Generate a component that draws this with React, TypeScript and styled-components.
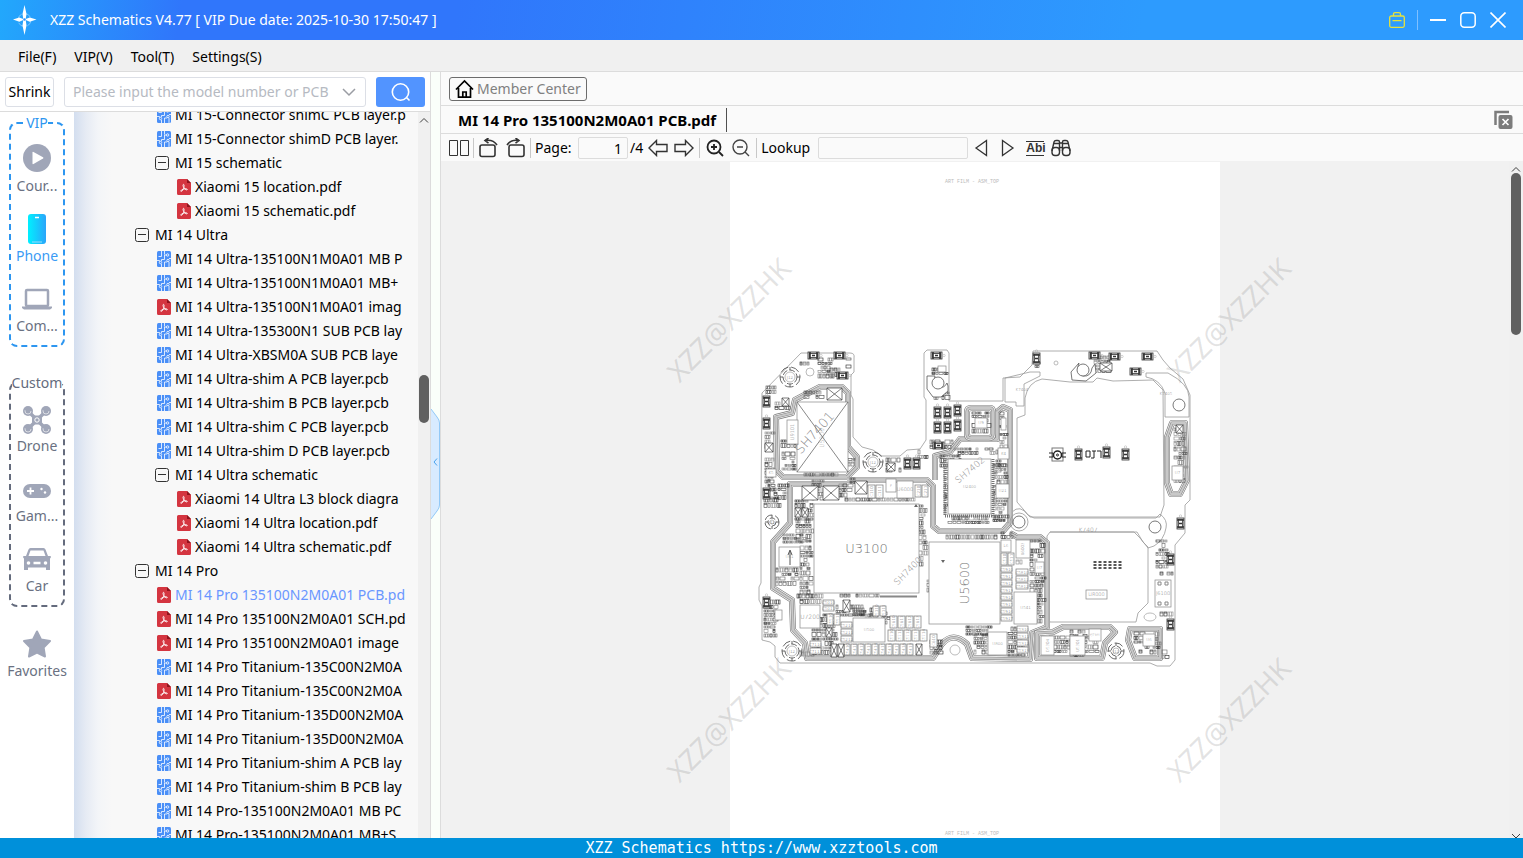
import React from "react";
import styled, { createGlobalStyle } from "styled-components";

const GlobalStyle = createGlobalStyle`
  *, *::before, *::after { box-sizing: border-box; }
  html, body, #root { height: 100%; margin: 0; }
  body { font-family: "Noto Sans", "Open Sans", sans-serif; font-size: 14px; line-height: 20px; color: #000; overflow: hidden; }
  button, input { font: inherit; color: inherit; margin: 0; }
  button { background: none; border: 0; padding: 0; cursor: pointer; }
`;

/* ---------- window frame ---------- */

const Window = styled.div`
  display: flex;
  flex-direction: column;
  height: 100vh;
  background: #fafafa;
`;

const TitleBar = styled.header`
  display: flex;
  align-items: center;
  flex: none;
  height: 40px;
  padding: 0 17px 0 12px;
  color: #fff;
  background: linear-gradient(100deg, #22a8fc 0, #3076fb 180px, #3076fb 30%, #2d9bfe 75%, #2d9bfe 100%);
`;

const AppTitle = styled.h1`
  flex: 1;
  margin: 0 0 0 12px;
  font-size: 14px;
  font-weight: 400;
  white-space: nowrap;
`;

const WindowButtons = styled.div`
  display: flex;
  align-items: center;
  gap: 14px;
`;

const WindowButton = styled.button`
  width: 16px;
  height: 16px;
  svg { display: block; }
`;

const TitleDivider = styled.span`
  width: 1px;
  height: 20px;
  margin: 0 -2px;
  background: #7fc0ff;
`;

const MenuBar = styled.nav`
  display: flex;
  flex: none;
  align-items: center;
  gap: 18px;
  height: 32px;
  padding: 2px 18px 0;
  background: #f0f0f0;
  border-bottom: 1px solid #dcdcdc;
`;

const Body = styled.main`
  display: flex;
  flex: 1;
  min-height: 0;
`;

const Footer = styled.footer`
  flex: none;
  height: 20px;
  background: #0090da;
  color: #fff;
  text-align: center;
  font: 400 15px/20px "DejaVu Sans Mono", monospace;
`;

/* ---------- left panel ---------- */

const LeftPanel = styled.section`
  display: flex;
  flex-direction: column;
  flex: none;
  width: 431px;
  border-right: 1px solid #dcdcdc;
`;

const SearchRow = styled.form`
  display: flex;
  flex: none;
  align-items: center;
  gap: 10px;
  height: 40px;
  padding: 0 5px;
  background: #fff;
  border-bottom: 1px solid #dcdcdc;
`;

const ShrinkButton = styled.button`
  width: 49px;
  height: 30px;
  border: 1px solid #dcdfe6;
  border-radius: 3px;
  background: #fff;
`;

const ModelBox = styled.label`
  display: flex;
  flex: 1;
  align-items: center;
  height: 30px;
  padding: 0 8px;
  border: 1px solid #dcdfe6;
  border-radius: 3px;
  background: #fff;
  svg { flex: none; }
`;

const ModelInput = styled.input`
  flex: 1;
  min-width: 0;
  border: 0;
  outline: 0;
  padding: 0;
  background: none;
  &::placeholder { color: #b6bac2; opacity: 1; }
`;

const SearchButton = styled.button`
  display: flex;
  align-items: center;
  justify-content: center;
  width: 49px;
  height: 30px;
  border-radius: 3px;
  background: #5294ff;
`;

const Browser = styled.div`
  display: flex;
  flex: 1;
  min-height: 0;
`;

const Sidebar = styled.aside`
  flex: none;
  width: 74px;
  padding: 1px 9px 0;
  background: #fff;
`;

const Group = styled.fieldset<{ $color: string }>`
  min-width: 0;
  margin: 0 0 26px;
  padding: 9px 0;
  border: 2px dashed ${(p) => p.$color};
  border-radius: 8px;
  display: flex;
  flex-direction: column;
  gap: 16px;
  &:last-of-type { margin-bottom: 20px; }
`;

const GroupLegend = styled.legend<{ $color: string }>`
  margin: 0 auto;
  padding: 0;
  color: ${(p) => p.$color};
`;

const CategoryButton = styled.button<{ $active?: boolean }>`
  display: flex;
  flex-direction: column;
  align-items: center;
  gap: 2px;
  width: 100%;
  color: ${(p) => (p.$active ? "#3a9bf5" : "#6a7182")};
  white-space: nowrap;
  svg { display: block; }
`;

const Tree = styled.div`
  flex: 1;
  min-width: 0;
  padding-right: 12px;
  overflow: hidden;
  background: linear-gradient(90deg, #d3deef 0, #e6ebf4 12px, #f3f5f8 24px, #f8f8f8 38px);
`;

const TreeList = styled.ul`
  list-style: none;
  margin: -9px 0 0;
  padding: 0;
`;

const TreeRow = styled.li<{ $level: number; $selected?: boolean }>`
  display: flex;
  align-items: center;
  height: 24px;
  padding-left: ${(p) => 41 + p.$level * 20}px;
  color: ${(p) => (p.$selected ? "#6a96ff" : "#000")};
  svg { display: block; }
`;

const RowIcon = styled.span<{ $file?: boolean }>`
  flex: none;
  width: 20px;
  padding-left: ${(p) => (p.$file ? 2 : 0)}px;
`;

const RowText = styled.span`
  flex: 1;
  min-width: 0;
  overflow: hidden;
  white-space: nowrap;
`;

const ScrollTrack = styled.div<{ $width: number }>`
  display: flex;
  flex: none;
  flex-direction: column;
  align-items: center;
  justify-content: space-between;
  width: ${(p) => p.$width}px;
  background: #f0f0f0;
  position: relative;
  svg { display: block; }
`;

const ScrollThumb = styled.div<{ $top: number; $height: number }>`
  position: absolute;
  top: ${(p) => p.$top}px;
  height: ${(p) => p.$height}px;
  width: 10px;
  border-radius: 5px;
  background: #606060;
`;

const Splitter = styled.div`
  position: relative;
  flex: none;
  display: flex;
  align-items: center;
  width: 10px;
  background: #fafffa;
  border-right: 1px solid #dcdcdc;
`;

const SplitHandle = styled.button`
  width: 9px;
  height: 110px;
  margin-top: 18px;
  svg { display: block; }
`;

/* ---------- document panel ---------- */

const DocPanel = styled.section`
  display: flex;
  flex: 1;
  flex-direction: column;
  min-width: 0;
`;

const MemberRow = styled.div`
  display: flex;
  align-items: center;
  flex: none;
  height: 34px;
  padding: 0 8px;
  border-bottom: 1px solid #dcdcdc;
`;

const MemberButton = styled.button`
  display: flex;
  align-items: center;
  gap: 3px;
  height: 24px;
  padding: 0 5px;
  border: 1px solid #6c6c6c;
  border-radius: 3px;
  color: #808080;
`;

const TabRow = styled.div`
  display: flex;
  align-items: center;
  justify-content: space-between;
  flex: none;
  height: 28px;
  padding: 0 9px 0 17px;
  border-bottom: 1px solid #dcdcdc;
`;

const DocTab = styled.button`
  height: 24px;
  padding-right: 10px;
  border-right: 1px solid #505050;
  font-size: 15px;
  font-weight: 700;
`;

const ToolBar = styled.div`
  display: flex;
  align-items: center;
  flex: none;
  gap: 4px;
  height: 26px;
  padding-left: 8px;
  margin-top: 1px;
`;

const Tool = styled.button<{ $width?: number }>`
  display: flex;
  align-items: center;
  justify-content: center;
  flex: none;
  width: ${(p) => p.$width ?? 22}px;
  height: 22px;
`;

const ToolSep = styled.span`
  flex: none;
  width: 1px;
  height: 20px;
  background: #c8c8c8;
`;

const ToolLabel = styled.label<{ $width: number }>`
  flex: none;
  width: ${(p) => p.$width}px;
  white-space: nowrap;
`;

const PageCount = styled.span`
  display: flex;
  align-items: center;
  gap: 2px;
`;

const ToolInput = styled.input<{ $width: number }>`
  flex: none;
  width: ${(p) => p.$width}px;
  height: 22px;
  padding: 0 5px;
  border: 1px solid #dcdcdc;
  border-radius: 2px;
  background: #fafafa;
  text-align: right;
  outline: 0;
`;

const AbiGlyph = styled.span`
  width: 18px;
  border: solid #333;
  border-width: 1px 0;
  color: #333;
  font: 700 12px/13px "Liberation Sans", sans-serif;
`;

const Viewer = styled.div`
  display: flex;
  flex: 1;
  min-height: 0;
`;

const Canvas = styled.div`
  display: flex;
  justify-content: center;
  flex: 1;
  min-width: 0;
  padding-top: 1px;
  overflow: hidden;
  background: #f1f1f1;
`;

const Page = styled.article`
  flex: none;
  width: 490px;
  background: #fff;
  svg { display: block; overflow: visible; }
`;

/* ---------- icons ---------- */

const PcbIcon = () => (
  <svg width="14" height="16" viewBox="0 0 14 16" fill="none">
    <rect width="14" height="16" rx="1.5" fill="#4a8ff7" />
    <path d="M4.500 0v5.500H1.500M7.500 0v3.500M0 9.500h2.500v1M9.500 4H7.500v4.500h-3V10M14 7.500h-2M4.500 16v-3M7.500 16v-5h2.500M12 11v5" stroke="#fff" strokeWidth=".8" />
    <circle cx="10.600" cy="4" r="1.200" stroke="#fff" strokeWidth=".8" />
    <circle cx="3.500" cy="11.500" r="1.200" stroke="#fff" strokeWidth=".8" />
    <circle cx="11" cy="9.500" r="1.200" stroke="#fff" strokeWidth=".8" />
  </svg>
);

const PdfIcon = () => (
  <svg width="14" height="16" viewBox="0 0 14 16" fill="none">
    <path d="M1.500 0H10l4 4v10.500a1.500 1.500 0 0 1-1.500 1.500h-11A1.500 1.500 0 0 1 0 14.500v-13A1.500 1.500 0 0 1 1.500 0Z" fill="#d43540" />
    <path d="M10 0l4 4h-4Z" fill="#8e141d" />
    <path d="M6.600 5.400c.8 0 .5 2 .2 3.100-.4 1.500-1.700 3.900-2.600 3.900-.8 0-.5-1 .9-1.700 1.300-.7 4.200-1.300 5-.6.700.6-.2 1.100-1.200.6C7.800 10 6 7.900 6 6.300c0-.5.200-.9.600-.9Z" stroke="#fff" strokeWidth=".9" />
  </svg>
);

const MinusIcon = () => (
  <svg width="14" height="14" viewBox="0 0 14 14" fill="none" stroke="#333">
    <rect x=".5" y=".5" width="13" height="13" rx="2" />
    <path d="M3 6.500h8" />
  </svg>
);

const Caret = ({ down }: { down?: boolean }) => (
  <svg width="12" height="12" viewBox="0 0 12 12" fill="none" stroke="#404040">
    <path d={down ? "M2 8l4 4 4-4" : "M2 10.500l4-4 4 4"} />
  </svg>
);

const gray = "#a0a6b8";
const categoryIcons: Record<string, React.ReactNode> = {
  play: (
    <>
      <circle cx="16" cy="16" r="14" fill={gray} />
      <path d="M11.500 10.500q0-1 1-.5l9.500 5.300q1 .7 0 1.300L12.500 22q-1 .5-1-.5Z" fill="#fff" />
    </>
  ),
  phone: (
    <>
      <defs>
        <linearGradient id="phoneFill" x1="0" x2="1" y1="0" y2="0">
          <stop offset="0" stopColor="#00f0ff" />
          <stop offset="1" stopColor="#2aa5fa" />
        </linearGradient>
      </defs>
      <rect x="7" y="2" width="18" height="30" rx="3" fill="url(#phoneFill)" />
      <path d="M14 5.500h4" stroke="#fff" strokeWidth="1.500" />
      <path d="M11 30h10" stroke="#9df" />
    </>
  ),
  laptop: (
    <>
      <rect x="5" y="8" width="22" height="16" rx="1" fill="none" stroke={gray} strokeWidth="2.500" />
      <path d="M1 24.500h30v1.500l-2 1.500H3L1 26Z" fill={gray} />
    </>
  ),
  drone: (
    <>
      <path d="M7 9l18 18M25 9L7 27" stroke={gray} strokeWidth="3.500" />
      <rect x="11" y="13.500" width="10" height="9" rx="3" fill={gray} />
      <circle cx="16" cy="18" r="2.200" fill={gray} stroke="#fff" />
      {[[7, 9], [25, 9], [7, 27], [25, 27]].map(([x, y]) => (
        <g key={`${x}-${y}`}>
          <circle cx={x} cy={y} r="5" fill={gray} />
          <circle cx={x} cy={y} r="3" fill="none" stroke="#fff" strokeWidth=".6" strokeDasharray="10 9" />
        </g>
      ))}
    </>
  ),
  gamepad: (
    <>
      <rect x="2" y="12" width="28" height="14" rx="7" fill={gray} />
      <path d="M9.500 15.500v7M6 19h7" stroke="#fff" strokeWidth="1.800" />
      <circle cx="20.500" cy="17" r="1.200" fill="#fff" />
      <circle cx="24" cy="20.500" r="1.200" fill="#fff" />
    </>
  ),
  car: (
    <>
      <path d="M7.500 7.500Q8 6 9.500 6h13q1.500 0 2 1.500L27 14h2.500q1 1 0 2L29 16.500V28h-4v-2.500H7V28H3V16.500L2.500 16q-1-1 0-2H5Z" fill={gray} />
      <path d="M9.500 8.500h13l2 5.500h-17Z" fill="#fff" />
      <circle cx="7.500" cy="21" r="1.800" fill="#fff" />
      <circle cx="24.500" cy="21" r="1.800" fill="#fff" />
      <path d="M12.500 21h7" stroke="#fff" strokeWidth="2.500" />
    </>
  ),
  star: <path d="M16 4.500l4 8 9 1.500-6.400 6.500 1.400 9L16 25.500 8 29.500l1.400-9L3 14l9-1.500Z" fill={gray} stroke={gray} strokeWidth="2" strokeLinejoin="round" />,
};

/* ---------- circuit board drawing ---------- */

type Box = [number, number, number, number];

const makeRandom = (seed: number) => () => {
  seed = (seed * 1103515245 + 12345) % 2147483648;
  return seed / 2147483648;
};

// Fills an area with rows of small passive parts.
const Parts = ({ area: [x, y, w, h], density = 0.88 }: { area: Box; density?: number }) => {
  const random = makeRandom(Math.round(x * 31 + y * 17 + w));
  const out: React.ReactNode[] = [];
  let cy = y;
  while (cy < y + h - 2) {
    const rowH = 3 + Math.floor(random() * 3);
    let cx = x;
    while (cx < x + w - 2) {
      const partW = 2 + Math.floor(random() * 4);
      if (random() < density) {
        const shade = ["#222", "#444", "#666", "#888"][Math.floor(random() * 4)];
        out.push(
          <g key={`${cx}-${cy}`} stroke={shade} strokeWidth=".6" fill="none">
            <rect x={cx} y={cy} width={partW} height={rowH - 1} />
            {random() > 0.25 && <path d={partW > 3 ? `M${cx + 1.5} ${cy}v${rowH - 1}M${cx + partW - 1.5} ${cy}v${rowH - 1}` : `M${cx} ${cy + 1}h${partW}`} />}
          </g>
        );
      }
      cx += partW + 1;
    }
    cy += rowH + 0.5;
  }
  return <>{out}</>;
};

// Rows of equal labelled capacitors.
const CapGrid = ({ x, y, cols, rows, w, h, label }: { x: number; y: number; cols: number; rows: number; w: number; h: number; label: string }) => (
  <g>
    {Array.from({ length: cols * rows }, (_, i) => {
      const cx = x + (i % cols) * (w + 1);
      const cy = y + Math.floor(i / cols) * (h + 1);
      const turn = h > w ? `rotate(-90 ${cx + w / 2} ${cy + h / 2})` : undefined;
      return (
        <g key={i}>
          <rect x={cx} y={cy} width={w} height={h} fill="#fff" stroke="#777" strokeWidth=".7" />
          <text x={cx + w / 2} y={cy + h / 2 + 1.5} fontSize="4" textAnchor="middle" fill="#666" transform={turn}>
            {label + (i + 10)}
          </text>
        </g>
      );
    })}
  </g>
);

const DarkPart = ({ x, y, wide }: { x: number; y: number; wide?: boolean }) => {
  const w = wide ? 11 : 7;
  const h = wide ? 7 : 11;
  return (
    <g fill="none" stroke="#333" strokeWidth=".8">
      <rect x={x} y={y} width={w} height={h} fill="#ddd" />
      <rect x={x + 1.5} y={y + 1.5} width={w - 3} height={h - 3} fill="#fff" />
      <path d={wide ? `M${x + 2} ${y}v7M${x + 9} ${y}v7M${x + 4} ${y + 3.5}h3` : `M${x} ${y + 2}h7M${x} ${y + 9}h7M${x + 2} ${y + 5.5}h3`} strokeWidth="1.6" />
      <circle cx={wide ? x + 13 : x + 3.5} cy={wide ? y + 3.5 : y - 2} r="1.2" stroke="#aaa" strokeWidth=".5" />
    </g>
  );
};

const Chip = ({ box: [x, y, w, h], label, size = 4, turn = 0 }: { box: Box; label?: string; size?: number; turn?: number }) => (
  <g>
    <rect x={x} y={y} width={w} height={h} fill="#fff" stroke="#888" strokeWidth=".7" />
    {label && (
      <text x={x + w / 2} y={y + h / 2 + size * 0.35} fontSize={size} textAnchor="middle" fill="#777" transform={turn ? `rotate(${turn} ${x + w / 2} ${y + h / 2})` : undefined}>
        {label}
      </text>
    )}
  </g>
);

const Crossed = ({ box: [x, y, w, h] }: { box: Box }) => (
  <path d={`M${x} ${y}h${w}v${h}h${-w}ZL${x + w} ${y + h}M${x + w} ${y}L${x} ${y + h}`} fill="#fff" stroke="#444" strokeWidth=".7" />
);

const Shield = ({ d }: { d: string }) => (
  <g fill="none" strokeLinejoin="round">
    <path d={d} stroke="#777" strokeWidth="6" />
    <path d={d} stroke="#f4f4f4" strokeWidth="4.8" />
    <path d={d} stroke="#888" strokeWidth="3.200" />
    <path d={d} stroke="#c8c8c8" strokeWidth="2" />
  </g>
);

const Screw = ({ x, y, r = 9 }: { x: number; y: number; r?: number }) => (
  <g fill="none" stroke="#444" strokeWidth=".8">
    <circle cx={x} cy={y} r={r} strokeDasharray="9 3" />
    <circle cx={x} cy={y} r={r - 3} strokeDasharray="6 2" />
    <circle cx={x} cy={y} r={r - 5} stroke="#aaa" />
    <path d={`M${x - r} ${y}h3M${x + r - 3} ${y}h3M${x} ${y - r}v3M${x} ${y + r - 3}v3`} />
    <text x={x} y={y + 1.5} fontSize="4" textAnchor="middle" fill="#666" stroke="none">J12</text>
  </g>
);

const clusters: Box[] = [
  [800, 362, 16, 6], [818, 358, 15, 22], [830, 368, 12, 10], [846, 358, 6, 12], [766, 386, 12, 8], [804, 391, 22, 9],
  [775, 402, 16, 10], [765, 432, 8, 20], [765, 458, 10, 26], [781, 440, 16, 8], [782, 452, 14, 20], [848, 454, 8, 14],
  [798, 473, 42, 4], [764, 498, 16, 12], [778, 484, 10, 18], [795, 500, 18, 22], [796, 520, 17, 24], [783, 534, 22, 12],
  [776, 568, 22, 20], [800, 546, 12, 50], [797, 594, 25, 10], [812, 480, 12, 22], [850, 478, 16, 10], [840, 498, 76, 5],
  [918, 505, 8, 60], [839, 484, 14, 12], [932, 368, 16, 8], [934, 392, 14, 10], [930, 440, 24, 8], [918, 450, 10, 10],
  [886, 458, 16, 16], [940, 455, 22, 12], [954, 448, 40, 10], [944, 466, 4, 56], [948, 516, 50, 8], [996, 450, 11, 22],
  [972, 412, 18, 22], [1000, 412, 7, 36], [993, 464, 15, 58], [1001, 532, 14, 8], [946, 535, 54, 6], [1030, 540, 14, 84],
  [1016, 560, 12, 6], [853, 608, 24, 8], [862, 614, 18, 5], [836, 605, 30, 12], [820, 614, 12, 8], [764, 600, 14, 40],
  [812, 618, 24, 38], [927, 580, 3, 14], [930, 640, 14, 14], [966, 626, 24, 12], [974, 634, 16, 22], [1008, 627, 16, 30],
  [1070, 630, 16, 26], [1044, 636, 56, 20], [1134, 632, 14, 22], [1150, 632, 9, 22], [1174, 428, 12, 58], [1156, 540, 12, 30],
  [1160, 572, 14, 6], [1160, 612, 12, 6], [1162, 650, 8, 12], [1094, 356, 18, 18], [765, 480, 12, 20], [1035, 362, 5, 8],
  [840, 594, 40, 5], [800, 652, 14, 6], [882, 612, 8, 14],
];

const outline =
  "M762 393L801 353H850Q855 353 854 358V372L851 375V395L853 399V437L862 447L873 450L882 456H900L907 450L920 449L926 440V400L924 397V353L927 350H947L949 353V401H1003V378L1020 377L1032 365L1033 351H1157L1163 360L1170 368L1183 379L1190 395V500L1185 505V533L1175 545V660L1170 666H1157L1150 663H780L775 657V646L770 642L762 640V606L759 600V587L761 583V500Z";

const Board = () => (
  <g fontFamily="DejaVu Sans" fontWeight="200">
    <g fill="none" stroke="#999" strokeWidth=".8">
      <path d={outline} />
      <path d="M1042 379L1070 382H1093L1097 378L1113 381L1153 380L1163 390L1164 505L1160 517H1030L1017 502V418L1025 415V398Q1028 382 1042 379Z" />
      <path d="M1050 532H1137L1143 542L1148 547V603L1138 613L1136 622H1050L1047 618V536Z" />
      <path d="M1005 378V402H1016V406H1024V384L1040 376V372H1030ZM1146 373H1168Q1189 384 1189 397V417H1165V393Q1160 379 1146 377Z" />
      <path d="M1008 524L1012 512Q1020 504 1028 515L1034 518H1156L1160 514Q1168 520 1166 528Q1164 540 1154 546L1148 548L1140 538L1134 532H1050" />
    </g>

    <Shield d="M820 387H842L848 393V447L857 457V467L847 477H783L777 471L776 417L792 413L795 400Z" />
    <Shield d="M847 480H927L933 486V526L939 531H1003L1010 523V410L1003 407L997 412V439H960L950 452L935 456V480" />
    <Shield d="M971 408H990Q993 408 993 412V434Q993 438 989 438H971Q967 438 967 434V412Q967 408 971 408Z" />
    <Shield d="M847 484H790V523L773 542V588L792 600L793 630L805 643L807 658H933L942 644Q953 631 967 644L972 658L1030 659L1032 633L1047 627V543L1040 537H1017L1010 533" />
    <Shield d="M1037 633L1053 632L1063 627H1110L1115 632L1105 643L1102 658H1037Z" />
    <Shield d="M1130 629H1160V658H1135L1128 640Z" />
    <Shield d="M1172 423H1185L1187 480L1180 494H1171L1167 483V437Z" />

    {clusters.map((area, i) => (
      <Parts key={i} area={area} />
    ))}

    <Chip box={[797, 402, 51, 70]} />
    <path d="M797 402l51 70M848 402l-51 70" stroke="#555" strokeWidth=".7" />
    <text x="815" y="437" fontSize="13" textAnchor="middle" fill="#888" transform="rotate(-48 815 433)">SH7401</text>
    <text x="822" y="440" fontSize="6" textAnchor="middle" fill="#999" transform="rotate(-90 822 438)">U5200</text>
    <Chip box={[814, 504, 105, 89]} label="U3100" size={13} />
    <path d="M914 507h4l-2-3Z" fill="#666" />
    <text x="908" y="574" fontSize="9" textAnchor="middle" fill="#888" transform="rotate(-45 908 571)">SH7400</text>
    <Chip box={[929, 542, 71, 82]} label="U5600" size={13} turn={-90} />
    <path d="M941 560h4l-2 3Z" fill="#666" />
    <Chip box={[948, 459, 43, 55]} label="U2400" size={4} />
    <text x="970" y="473" fontSize="9" textAnchor="middle" fill="#888" transform="rotate(-40 970 470)">SH7402</text>
    <path d="M945 458v58h48v-58" fill="none" stroke="#777" strokeWidth="3" strokeDasharray="1 1" />

    <Chip box={[787, 420, 11, 24]} label="U9101" size={5} turn={-90} />
    <Chip box={[779, 547, 21, 20]} label="U61" />
    <path d="M790 565v-14m-2 4l2-5 2 5" fill="none" stroke="#555" />
    <Chip box={[800, 605, 20, 23]} label="U7200" size={6} />
    <Chip box={[853, 618, 32, 24]} label="U500" />
    <Chip box={[897, 481, 16, 17]} label="U6000" size={5} />
    <Chip box={[886, 479, 10, 13]} label="E" size={3} />
    <Chip box={[988, 632, 19, 23]} label="U800" />
    <Chip box={[1016, 540, 14, 18]} label="U6003" turn={-90} />
    <Chip box={[1001, 540, 10, 12]} label="L6" />
    <Chip box={[1014, 592, 23, 32]} label="U541" />
    <Chip box={[1035, 562, 9, 11]} label="U7" />
    <Chip box={[1041, 636, 13, 19]} label="D5304" turn={-90} />
    <Chip box={[1070, 636, 15, 19]} label="U5301" turn={-90} />
    <Chip box={[1089, 629, 12, 12]} label="Q7301" size={3} />
    <Chip box={[1143, 634, 12, 12]} label="U6" />
    <Chip box={[1086, 590, 21, 9]} label="U8000" size={5} />
    <Chip box={[1155, 580, 16, 27]} label="J6100" size={5} />
    <Chip box={[998, 448, 11, 11]} label="K4" />
    <Chip box={[996, 484, 13, 14]} label="U21" />
    <Chip box={[1001, 418, 5, 12]} />
    <Chip box={[1172, 466, 11, 14]} label="U7" />
    <Chip box={[938, 366, 8, 6]} />
    <Chip box={[766, 469, 10, 8]} label="K5" />
    <Chip box={[775, 610, 7, 10]} />
    <Chip box={[975, 418, 12, 10]} label="U9" />
    <text x="1088" y="532" fontSize="6" textAnchor="middle" fill="#777">K7407</text>
    <text x="1022" y="391" fontSize="4" textAnchor="middle" fill="#777">K7404</text>
    <text x="1166" y="395" fontSize="4" textAnchor="middle" fill="#777">K7405</text>

    <CapGrid x={868} y={485} cols={2} rows={1} w={7} h={13} label="C1" />
    <CapGrid x={915} y={485} cols={2} rows={1} w={6} h={12} label="C2" />
    <CapGrid x={1001} y={566} cols={1} rows={8} w={11} h={6} label="C59" />
    <CapGrid x={1001} y={553} cols={2} rows={1} w={6} h={12} label="C5" />
    <CapGrid x={1016} y={569} cols={1} rows={3} w={12} h={6} label="C58" />
    <CapGrid x={1017} y={626} cols={1} rows={4} w={11} h={6} label="C53" />
    <CapGrid x={890} y={616} cols={4} rows={1} w={7} h={12} label="C56" />
    <CapGrid x={888} y={630} cols={5} rows={1} w={7} h={11} label="C57" />
    <CapGrid x={844} y={644} cols={10} rows={1} w={6} h={11} label="C54" />
    <CapGrid x={841} y={622} cols={1} rows={3} w={11} h={6} label="C52" />
    <CapGrid x={823} y={600} cols={1} rows={2} w={11} h={5} label="C50" />
    <CapGrid x={827} y={614} cols={2} rows={1} w={6} h={11} label="C55" />
    <CapGrid x={873} y={606} cols={2} rows={1} w={6} h={10} label="C51" />
    <CapGrid x={810} y={641} cols={1} rows={2} w={11} h={6} label="C71" />
    <CapGrid x={930} y={634} cols={1} rows={1} w={7} h={13} label="C6" />

    <Crossed box={[827, 388, 15, 12]} />
    <Crossed box={[802, 486, 16, 14]} />
    <Crossed box={[823, 486, 16, 14]} />
    <Crossed box={[855, 481, 12, 13]} />
    <Crossed box={[782, 398, 7, 8]} />
    <Crossed box={[765, 443, 8, 9]} />
    <Crossed box={[887, 463, 8, 8]} />
    <Crossed box={[795, 508, 6, 9]} />
    <Crossed box={[802, 508, 6, 9]} />
    <Crossed box={[843, 600, 7, 12]} />
    <Crossed box={[826, 628, 6, 9]} />
    <Crossed box={[831, 644, 6, 13]} />
    <Crossed box={[838, 644, 6, 13]} />
    <Crossed box={[916, 644, 6, 11]} />
    <Crossed box={[1100, 363, 12, 8]} />
    <Crossed box={[1176, 425, 7, 8]} />

    {([[763, 396], [763, 418], [763, 488], [763, 597], [1033, 353], [1075, 449], [1103, 447], [1122, 449], [1167, 554], [1177, 518], [1167, 619], [904, 458], [913, 458], [934, 407], [944, 407], [954, 405], [934, 422], [944, 422], [954, 420]] as const).map(([x, y]) => (
      <DarkPart key={`${x}-${y}`} x={x} y={y} />
    ))}
    {([[808, 352], [834, 352], [837, 372], [931, 352], [933, 442], [1089, 352], [1109, 353], [1142, 353], [1130, 368]] as const).map(([x, y]) => (
      <DarkPart key={`${x}-${y}`} x={x} y={y} wide />
    ))}

    <Screw x={790} y={377} r={10} />
    <Screw x={873} y={462} r={10} />
    <Screw x={792} y={651} r={10} />
    <Screw x={1116} y={651} r={8} />
    <Screw x={772} y={522} r={7} />
    <g fill="#fff" stroke="#555" strokeWidth=".8">
      <path d="M927 376h8q-2 8 3 11 6 2 9-4l1 3v5l-7 6h-8l-6-8ZM1071 372l8-9q-4 10 4 13 8 1 9-8l3-4 1 9-10 8-14-1Z" />
      <circle cx="938" cy="383" r="6" />
      <circle cx="1083" cy="370" r="6" />
      <circle cx="810" cy="372" r="4" stroke="#aaa" />
      <circle cx="1056" cy="363" r="2" stroke="#aaa" />
      <circle cx="1179" cy="405" r="6" />
      <circle cx="1019" cy="522" r="6" />
      <circle cx="1019" cy="522" r="9" fill="none" stroke="#999" />
      <circle cx="1155" cy="527" r="6" />
      <circle cx="955" cy="650" r="5" stroke="#aaa" />
      <ellipse cx="1150" cy="617" rx="6" ry="4" stroke="#aaa" />
    </g>
    <g fill="none" stroke="#222">
      <rect x="1052" y="448" width="11" height="13" stroke="#777" />
      <circle cx="1057.500" cy="455" r="4" strokeWidth="1.500" />
      <circle cx="1057.500" cy="455" r="1" />
      <path d="M1049 453h4v4h-4M1066 453h-4v4h4M1086 451h4v6h-4ZM1092 451h4M1094 451v7h-3M1097 451h4v7" />
      <path d="M1095 561v8m5-8v8m5-8v8m5-8v8m5-8v8m5-8v8" stroke="#555" strokeWidth="3" strokeDasharray="2 1" />
      <path d="M1158 582h3v3h-3ZM1165 582h3v3h-3ZM1158 602h3v3h-3ZM1165 602h3v3h-3Z" stroke="#888" />
      <path d="M880 596.500h37" stroke="#888" strokeWidth="2" />
    </g>
  </g>
);

const PageDrawing = () => (
  <svg width="490" height="690" viewBox="730 162 490 690" aria-label="Board layout">
    <g fontFamily="Liberation Mono" fontSize="5" fill="#bbb" textAnchor="middle">
      <text x="972" y="183">ART FILM - ASM_TOP</text>
      <text x="972" y="835">ART FILM - ASM_TOP</text>
    </g>
    <Board />
    <g fontFamily="Noto Sans" fontSize="28" fill="#808080" fillOpacity=".22" textAnchor="middle">
      {([[729, 320], [1229, 320], [729, 720], [1229, 720]] as const).map(([x, y]) => (
        <text key={`${x}-${y}`} x={x} y={y + 10} transform={`rotate(-45 ${x} ${y})`}>XZZ@XZZHK</text>
      ))}
    </g>
  </svg>
);

/* ---------- data ---------- */

type Row = { kind: "folder" | "pcb" | "pdf"; level: number; text: string; selected?: boolean };

const rows: Row[] = [
  { kind: "pcb", level: 2, text: "MI 15-Connector shimC PCB layer.p" },
  { kind: "pcb", level: 2, text: "MI 15-Connector shimD PCB layer." },
  { kind: "folder", level: 2, text: "MI 15 schematic" },
  { kind: "pdf", level: 3, text: "Xiaomi 15 location.pdf" },
  { kind: "pdf", level: 3, text: "Xiaomi 15 schematic.pdf" },
  { kind: "folder", level: 1, text: "MI 14 Ultra" },
  { kind: "pcb", level: 2, text: "MI 14 Ultra-135100N1M0A01 MB P" },
  { kind: "pcb", level: 2, text: "MI 14 Ultra-135100N1M0A01 MB+" },
  { kind: "pdf", level: 2, text: "MI 14 Ultra-135100N1M0A01 imag" },
  { kind: "pcb", level: 2, text: "MI 14 Ultra-135300N1 SUB PCB lay" },
  { kind: "pcb", level: 2, text: "MI 14 Ultra-XBSM0A SUB PCB laye" },
  { kind: "pcb", level: 2, text: "MI 14 Ultra-shim A PCB layer.pcb" },
  { kind: "pcb", level: 2, text: "MI 14 Ultra-shim B PCB layer.pcb" },
  { kind: "pcb", level: 2, text: "MI 14 Ultra-shim C PCB layer.pcb" },
  { kind: "pcb", level: 2, text: "MI 14 Ultra-shim D PCB layer.pcb" },
  { kind: "folder", level: 2, text: "MI 14 Ultra schematic" },
  { kind: "pdf", level: 3, text: "Xiaomi 14 Ultra L3 block diagra" },
  { kind: "pdf", level: 3, text: "Xiaomi 14 Ultra location.pdf" },
  { kind: "pdf", level: 3, text: "Xiaomi 14 Ultra schematic.pdf" },
  { kind: "folder", level: 1, text: "MI 14 Pro" },
  { kind: "pdf", level: 2, text: "MI 14 Pro 135100N2M0A01 PCB.pd", selected: true },
  { kind: "pdf", level: 2, text: "MI 14 Pro 135100N2M0A01 SCH.pd" },
  { kind: "pdf", level: 2, text: "MI 14 Pro 135100N2M0A01 image" },
  { kind: "pcb", level: 2, text: "MI 14 Pro Titanium-135C00N2M0A" },
  { kind: "pdf", level: 2, text: "MI 14 Pro Titanium-135C00N2M0A" },
  { kind: "pcb", level: 2, text: "MI 14 Pro Titanium-135D00N2M0A" },
  { kind: "pcb", level: 2, text: "MI 14 Pro Titanium-135D00N2M0A" },
  { kind: "pcb", level: 2, text: "MI 14 Pro Titanium-shim A PCB lay" },
  { kind: "pcb", level: 2, text: "MI 14 Pro Titanium-shim B PCB lay" },
  { kind: "pcb", level: 2, text: "MI 14 Pro-135100N2M0A01 MB PC" },
  { kind: "pcb", level: 2, text: "MI 14 Pro-135100N2M0A01 MB+S" },
];

const groups = [
  { name: "VIP", color: "#2d96f0", items: [["play", "Cour..."], ["phone", "Phone"], ["laptop", "Com..."]] },
  { name: "Custom", color: "#646b7d", items: [["drone", "Drone"], ["gamepad", "Gam..."], ["car", "Car"]] },
];

const Category = ({ icon, label }: { icon: string; label: string }) => (
  <CategoryButton type="button" $active={icon === "phone"}>
    <svg width="32" height="32" viewBox="0 0 32 32">{categoryIcons[icon]}</svg>
    {label}
  </CategoryButton>
);

const rotateLeft = (
  <>
    <rect x="1" y="7" width="15" height="11.500" rx="2" />
    <path d="M6 2.500q8-1.500 12 4.500M9.500 0L6 2.500l3.500 2.700" />
  </>
);

export default function App() {
  return (
    <Window>
      <GlobalStyle />
      <TitleBar>
        <svg width="26" height="32" viewBox="0 0 26 32">
          <circle cx="12.500" cy="16" r="6.500" fill="none" stroke="#8fd0ff" strokeWidth=".8" strokeDasharray="7 3" />
          <path d="M12.500 1l2 9-.8 5 4-1.600 6.800 2.100-6.800 2.200-4-1.700.8 5.500-2 9.500-2-9.500.8-5.500-4 1.700-6.300-2.200 6.300-2.100 4 1.600-.8-5Z" fill="#fff" />
          <circle cx="12.500" cy="15.500" r="1.200" fill="#2c8ffb" />
        </svg>
        <AppTitle>XZZ Schematics V4.77 [ VIP Due date: 2025-10-30 17:50:47 ]</AppTitle>
        <WindowButtons>
          <WindowButton aria-label="Store">
            <svg width="16" height="16" viewBox="0 0 16 16" fill="none" stroke="#e6e23c" strokeWidth="1.300">
              <rect x=".7" y="4" width="14.600" height="11.300" rx="1.500" />
              <path d="M4.500 4V2.200Q4.500.7 6 .7h4q1.500 0 1.500 1.500V4M3.500 8.700h9" />
            </svg>
          </WindowButton>
          <TitleDivider />
          <WindowButton aria-label="Minimize">
            <svg width="16" height="16" viewBox="0 0 16 16" stroke="#fff" strokeWidth="2"><path d="M0 8h16" /></svg>
          </WindowButton>
          <WindowButton aria-label="Maximize">
            <svg width="16" height="16" viewBox="0 0 16 16" fill="none" stroke="#fff" strokeWidth="1.500"><rect x=".8" y=".8" width="14.400" height="14.400" rx="3.500" /></svg>
          </WindowButton>
          <WindowButton aria-label="Close">
            <svg width="16" height="16" viewBox="0 0 16 16" stroke="#fff" strokeWidth="1.600"><path d="M.5.5l15 15M15.500.5l-15 15" /></svg>
          </WindowButton>
        </WindowButtons>
      </TitleBar>

      <MenuBar>
        {["File(F)", "VIP(V)", "Tool(T)", "Settings(S)"].map((m) => (
          <button key={m}>{m}</button>
        ))}
      </MenuBar>

      <Body>
        <LeftPanel>
          <SearchRow onSubmit={(e) => e.preventDefault()}>
            <ShrinkButton type="button">Shrink</ShrinkButton>
            <ModelBox>
              <ModelInput aria-label="Model" placeholder="Please input the model number or PCB" />
              <svg width="16" height="16" viewBox="0 0 16 16" fill="none" stroke="#9a9da3" strokeWidth="1.500"><path d="M2 5l6 6 6-6" /></svg>
            </ModelBox>
            <SearchButton aria-label="Search">
              <svg width="20" height="20" viewBox="0 0 20 20" fill="none" stroke="#fff" strokeWidth="1.600"><circle cx="9.500" cy="10" r="8.200" /><path d="M15.500 15.500l3 3" /></svg>
            </SearchButton>
          </SearchRow>
          <Browser>
            <Sidebar>
              {groups.map((g) => (
                <Group key={g.name} $color={g.color}>
                  <GroupLegend $color={g.color}>{g.name}</GroupLegend>
                  {g.items.map(([icon, label]) => (
                    <Category key={icon} icon={icon} label={label} />
                  ))}
                </Group>
              ))}
              <Category icon="star" label="Favorites" />
            </Sidebar>
            <Tree>
              <TreeList>
                {rows.map((r, i) => (
                  <TreeRow key={i} $level={r.level} $selected={r.selected}>
                    <RowIcon $file={r.kind !== "folder"}>
                      {r.kind === "folder" ? <MinusIcon /> : r.kind === "pcb" ? <PcbIcon /> : <PdfIcon />}
                    </RowIcon>
                    <RowText>{r.text}</RowText>
                  </TreeRow>
                ))}
              </TreeList>
            </Tree>
            <ScrollTrack $width={12}>
              <Caret />
              <ScrollThumb $top={263} $height={48} />
            </ScrollTrack>
          </Browser>
        </LeftPanel>

        <Splitter>
          <SplitHandle aria-label="Collapse panel">
            <svg width="9" height="110" viewBox="0 0 9 110" fill="none">
              <path d="M0 0l6 8q2.500 3 2.500 6v82q0 3-2.500 6l-6 8" fill="#d8ebff" stroke="#92c9f7" />
              <path d="M6 49.500L3 53l3 3.500" stroke="#4aa3ee" />
            </svg>
          </SplitHandle>
        </Splitter>

        <DocPanel>
          <MemberRow>
            <MemberButton>
              <svg width="19" height="20" viewBox="0 0 19 20" fill="none" stroke="#000" strokeWidth="1.700">
                <path d="M1 10.500L9.500 2 18 10.500M3.500 9v9.200h12V9M7.800 18v-5h3.400v5" />
              </svg>
              Member Center
            </MemberButton>
          </MemberRow>
          <TabRow>
            <DocTab>MI 14 Pro 135100N2M0A01 PCB.pdf</DocTab>
            <Tool aria-label="Close all tabs">
              <svg width="20" height="20" viewBox="0 0 20 20" fill="none">
                <path d="M2.500 15V2H16" stroke="#7c7c7c" strokeWidth="2.500" />
                <rect x="5.500" y="5" width="14" height="14" rx="2" fill="#7c7c7c" />
                <path d="M9.500 9l6 6M15.500 9l-6 6" stroke="#fff" strokeWidth="1.700" />
              </svg>
            </Tool>
          </TabRow>
          <ToolBar>
            <Tool aria-label="Two pages" $width={20}>
              <svg width="20" height="18" viewBox="0 0 20 18" fill="none" stroke="#333"><path d="M.5 1.500h8v15h-8ZM11.500 1.500h8v15h-8Z" /></svg>
            </Tool>
            <ToolSep />
            <Tool aria-label="Rotate left"><svg width="20" height="20" viewBox="0 0 20 20" fill="none" stroke="#333" strokeWidth="1.600">{rotateLeft}</svg></Tool>
            <Tool aria-label="Rotate right"><svg width="20" height="20" viewBox="0 0 20 20" fill="none" stroke="#333" strokeWidth="1.600"><g transform="matrix(-1 0 0 1 20 0)">{rotateLeft}</g></svg></Tool>
            <ToolSep />
            <ToolLabel htmlFor="page" $width={39}>Page:</ToolLabel>
            <PageCount>
              <ToolInput id="page" $width={50} defaultValue="1" />
              /4
            </PageCount>
            <Tool aria-label="Previous page"><svg width="20" height="18" viewBox="0 0 20 18" fill="none" stroke="#333" strokeWidth="1.400"><path d="M1 9l7.500-7.500V5.500H19v7H8.500v4Z" /></svg></Tool>
            <Tool aria-label="Next page"><svg width="20" height="18" viewBox="0 0 20 18" fill="none" stroke="#333" strokeWidth="1.400"><path d="M19 9l-7.500-7.500V5.500H1v7h10.500v4Z" /></svg></Tool>
            <ToolSep />
            <Tool aria-label="Zoom in"><svg width="18" height="18" viewBox="0 0 18 18" fill="none" stroke="#222" strokeWidth="1.800"><circle cx="8" cy="8" r="6.500" /><path d="M13 13l4 4M5 8h6M8 5v6" /></svg></Tool>
            <Tool aria-label="Zoom out"><svg width="18" height="18" viewBox="0 0 18 18" fill="none" stroke="#444" strokeWidth="1.400"><circle cx="8" cy="8" r="7" /><path d="M13 13l4 4M5 8h6" /></svg></Tool>
            <ToolSep />
            <ToolLabel htmlFor="lookup" $width={53}>Lookup</ToolLabel>
            <ToolInput id="lookup" $width={150} />
            <Tool aria-label="Find previous"><svg width="18" height="18" viewBox="0 0 18 18" fill="none" stroke="#333" strokeWidth="1.300"><path d="M2 9L12.500 1.500v15Z" /></svg></Tool>
            <Tool aria-label="Find next"><svg width="18" height="18" viewBox="0 0 18 18" fill="none" stroke="#333" strokeWidth="1.300"><path d="M13 9L2.500 1.500v15Z" /></svg></Tool>
            <Tool aria-label="Match text"><AbiGlyph>Abi</AbiGlyph></Tool>
            <Tool aria-label="Find all">
              <svg width="20" height="18" viewBox="0 0 20 18" fill="none" stroke="#333" strokeWidth="1.400">
                <path d="M1 12L3 3q.5-1.500 2-1.500h2Q8.500 1.500 8.500 3v9M19 12L17 3q-.5-1.500-2-1.500h-2q-1.500 0-1.500 1.500v9M8.500 4h3M8.500 8.500h3M3 4.500h5.500M11.500 4.500H17" />
                <rect x="1" y="8.500" width="7.500" height="8" rx="3" />
                <rect x="11.500" y="8.500" width="7.500" height="8" rx="3" />
              </svg>
            </Tool>
          </ToolBar>
          <Viewer>
            <Canvas>
              <Page><PageDrawing /></Page>
            </Canvas>
            <ScrollTrack $width={14}>
              <Caret />
              <ScrollThumb $top={12} $height={162} />
              <Caret down />
            </ScrollTrack>
          </Viewer>
        </DocPanel>
      </Body>

      <Footer>XZZ Schematics https://www.xzztools.com</Footer>
    </Window>
  );
}
